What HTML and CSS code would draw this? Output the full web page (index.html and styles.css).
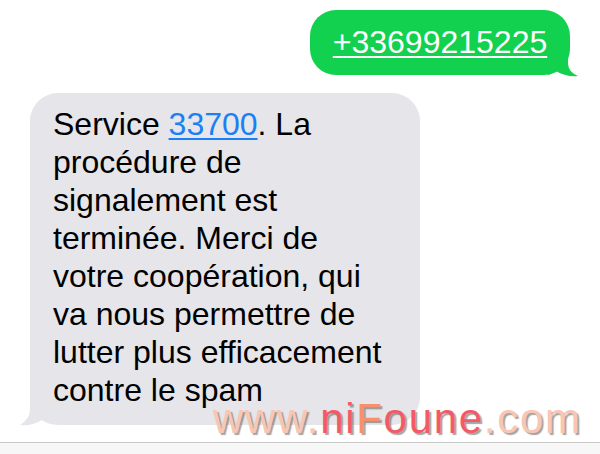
FILE: index.html
```html
<!DOCTYPE html>
<html lang="fr">
<head>
<meta charset="utf-8">
<title>SMS 33700</title>
<link rel="stylesheet" href="styles.css">
</head>
<body>
<div class="screen">
  <div class="thread">
    <div class="row row-out">
      <div class="bubble bubble-out">
        <a class="phone" href="#">+33699215225</a>
        <svg class="tail tail-out" width="32" height="28" viewBox="0 0 32 28" aria-hidden="true">
          <path d="M0 0 L20 0 L20 12 C20 19 23 23 30 26 C23 27 14 25 8 21 C5 23 2 24.5 0 25 Z"/>
        </svg>
      </div>
    </div>
    <div class="row row-in">
      <div class="bubble bubble-in">
        <p class="msg">Service <a class="link" href="#">33700</a>. La procédure de signalement est terminée. Merci de votre coopération, qui va nous permettre de lutter plus efficacement contre le spam</p>
        <svg class="tail tail-in" width="32" height="30" viewBox="0 0 32 30" aria-hidden="true">
          <path d="M32 0 L10 0 L10 12 C10 19 7 23 0 28 C7 29 16 27 22 23 C25 25 28 26.5 32 27.3 Z"/>
        </svg>
      </div>
    </div>
  </div>
  <div class="bottom-bar"></div>
  <div class="watermark"><span class="wm-a">www.</span><span class="wm-b">ni</span><span class="wm-c">F</span><span class="wm-b">oune</span><span class="wm-a">.com</span></div>
</div>
</body>
</html>
```
FILE: styles.css
```css
html, body {
  margin: 0;
  padding: 0;
  background: #ffffff;
}

body {
  font-family: "Liberation Sans", Arial, Helvetica, sans-serif;
  color: #000;
}

.screen {
  position: relative;
  width: 600px;
  height: 454px;
  overflow: hidden;
  display: flex;
  flex-direction: column;
}

.thread {
  display: flex;
  flex-direction: column;
  padding-top: 10px;
}

.row {
  display: flex;
}

.row-out {
  justify-content: flex-end;
  padding-right: 30px;
}

.row-in {
  justify-content: flex-start;
  padding-left: 30px;
  margin-top: 18px;
}

.bubble {
  position: relative;
  box-sizing: border-box;
}

.bubble-out {
  width: 260px;
  height: 65px;
  border-radius: 26px;
  background: #12d14f;
  display: flex;
  align-items: center;
  justify-content: center;
  fill: #12d14f;
}

.phone {
  color: #fff;
  font-size: 32px;
  line-height: 65px;
  text-decoration: underline;
  text-decoration-thickness: 2px;
  text-underline-offset: 3px;
}

.bubble-in {
  width: 390px;
  border-radius: 28px;
  background: #e5e5ea;
  padding: 12px 31px 16px 23px;
  fill: #e5e5ea;
}

.msg {
  margin: 0;
  font-size: 32px;
  line-height: 38px;
  color: #000;
}

.link {
  color: #1b80f6;
  text-decoration: underline;
  text-decoration-thickness: 1.5px;
  text-underline-offset: 3px;
}

.tail {
  position: absolute;
  display: block;
}

.tail-out {
  right: -10px;
  bottom: -3px;
}

.tail-in {
  left: -10px;
  bottom: -2px;
}

.bottom-bar {
  margin-top: auto;
  height: 11px;
  border-top: 1px solid #c8c8c8;
  background: #f7f7f7;
}

.watermark {
  position: absolute;
  left: 213px;
  top: 398px;
  font-size: 42px;
  line-height: 42px;
  letter-spacing: 1.7px;
  white-space: nowrap;
  text-shadow: 2px 2px 1px rgba(90, 90, 90, 0.55);
}

.wm-a { color: #f9c6b4; }
.wm-b { color: #f45a66; }
.wm-c { color: #f6906e; }
```
